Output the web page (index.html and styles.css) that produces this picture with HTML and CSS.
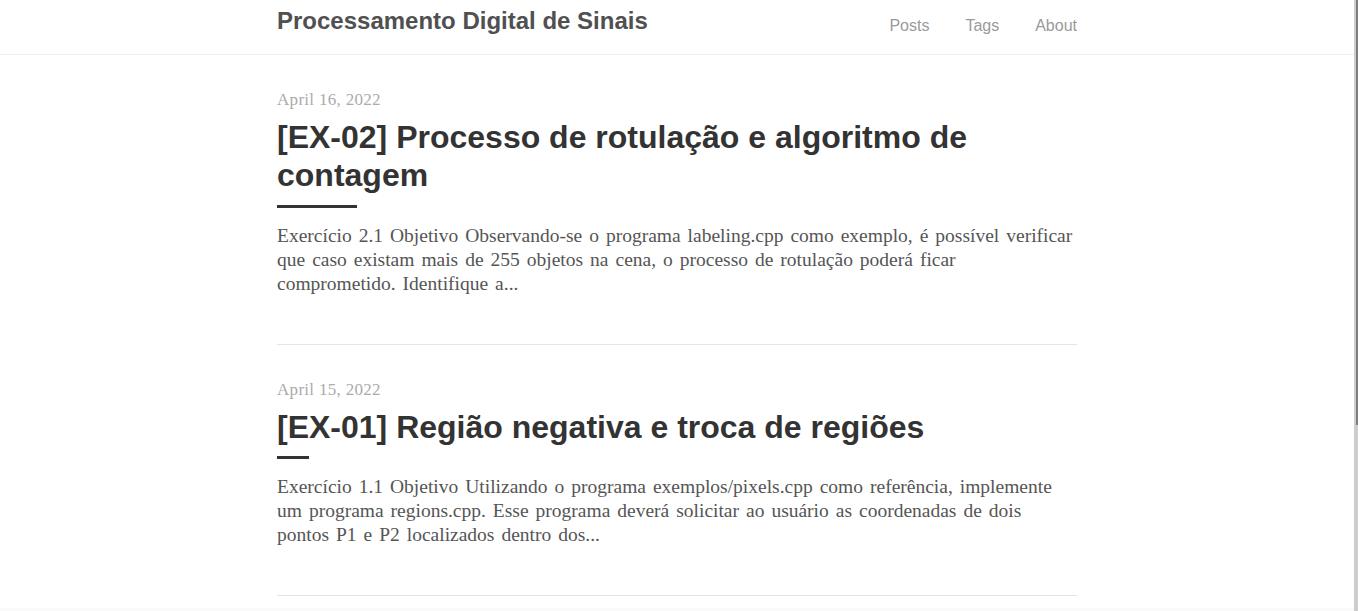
FILE: index.html
```html
<!DOCTYPE html>
<html lang="pt">
<head>
<meta charset="utf-8">
<title>Processamento Digital de Sinais</title>
<link rel="stylesheet" href="styles.css">
</head>
<body>
<div class="page">
  <header class="site-header">
    <div class="container header-inner">
      <a class="site-title" href="#">Processamento Digital de Sinais</a>
      <nav class="site-nav">
        <a href="#">Posts</a>
        <a href="#">Tags</a>
        <a href="#">About</a>
      </nav>
    </div>
  </header>
  <main class="container">
    <article class="post">
      <div class="post-date">April 16, 2022</div>
      <h2 class="post-title"><a href="#">[EX-02] Processo de rotulação e algoritmo de contagem</a></h2>
      <div class="post-rule post-rule--wide"></div>
      <p class="post-summary">Exercício 2.1 Objetivo Observando-se o programa labeling.cpp como exemplo, é possível verificar que caso existam mais de 255 objetos na cena, o processo de rotulação poderá ficar comprometido. Identifique a...</p>
    </article>
    <article class="post">
      <div class="post-date">April 15, 2022</div>
      <h2 class="post-title"><a href="#">[EX-01] Região negativa e troca de regiões</a></h2>
      <div class="post-rule post-rule--short"></div>
      <p class="post-summary">Exercício 1.1 Objetivo Utilizando o programa exemplos/pixels.cpp como referência, implemente um programa regions.cpp. Esse programa deverá solicitar ao usuário as coordenadas de dois pontos P1 e P2 localizados dentro dos...</p>
    </article>
  </main>
  <footer class="site-footer"></footer>
</div>
<div class="scrollbar"><div class="scrollbar-thumb"></div></div>
</body>
</html>
```
FILE: styles.css
```css
body {
  margin: 0;
  background: #ffffff;
  font-family: "Liberation Serif", "Times New Roman", serif;
  color: #555;
}
a {
  text-decoration: none;
  color: inherit;
}
.page {
  margin-right: 4px;
}
.scrollbar {
  position: fixed;
  top: 0;
  right: 0;
  bottom: 0;
  width: 4px;
  background: #cdcdcd;
}
.scrollbar-thumb {
  margin-left: 2px;
  height: 425px;
  background: #7d7d7d;
}
.container {
  width: 800px;
  margin: 0 auto;
}
.site-header {
  height: 54px;
  border-bottom: 1px solid #eeeeee;
}
.header-inner {
  display: flex;
  justify-content: space-between;
  align-items: flex-start;
}
.site-title {
  margin-top: 6px;
  font-family: "Liberation Sans", Arial, sans-serif;
  font-weight: bold;
  font-size: 24px;
  line-height: 30px;
  color: #505050;
}
.site-nav {
  display: flex;
  gap: 36px;
  margin-top: 16px;
  font-family: "Liberation Sans", Arial, sans-serif;
  font-size: 16px;
  line-height: 20px;
}
.site-nav a {
  color: #9a9a9a;
}
.post {
  padding: 33px 0 48px;
  border-bottom: 1px solid #e5e5e5;
}
.post-date {
  font-size: 17px;
  line-height: 24px;
  letter-spacing: 0.3px;
  color: #ababab;
}
.post-title {
  margin: 6px 0 0;
  font-family: "Liberation Sans", Arial, sans-serif;
  font-weight: bold;
  font-size: 32px;
  line-height: 1.2;
  color: #333333;
}
.post-rule {
  height: 3px;
  margin-top: 10px;
  background: #333333;
}
.post-rule--wide {
  width: 80px;
}
.post-rule--short {
  width: 32px;
}
.post-summary {
  margin: 16px 0 0;
  font-size: 19.5px;
  line-height: 24px;
  word-spacing: 2.1px;
  color: #555555;
}
.site-footer {
  margin-top: 12px;
  height: 270px;
  background: #fafafa;
}
```
